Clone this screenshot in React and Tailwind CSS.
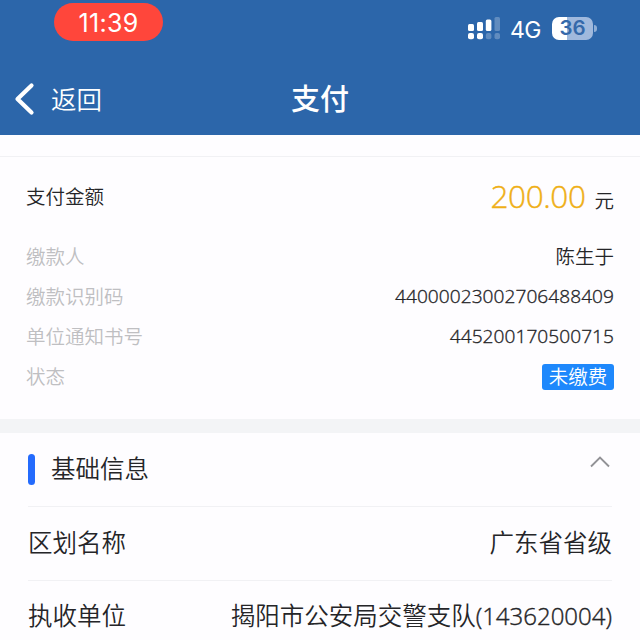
import clsx from 'clsx';

const payment = [
  { label: '缴款人', value: '陈生于' },
  { label: '缴款识别码', value: '44000023002706488409', numeric: true },
  { label: '单位通知书号', value: '445200170500715', numeric: true },
];

const Battery = () => (
  <div className="flex items-center">
    <div className="flex h-[23px] w-[41px] items-center justify-center rounded-[7px] bg-linear-to-r from-white from-36% to-[#a0b9dd] to-36%">
      <span className="pt-px font-['Inter'] text-[20.5px] leading-none font-semibold text-[#3569aa]">36</span>
    </div>
    <div className="ml-px h-[7px] w-[3px] rounded-r-full bg-[#8faed6]" />
  </div>
);

// two SIMs: the upper bars belong to the first one, the dots to the second
const Signal = () => (
  <svg width="33" height="24" viewBox="0 0 33 24" fill="#fff">
    <rect x="0" y="8" width="6" height="7" rx="1.5" />
    <rect x="9" y="6" width="6" height="9" rx="1.5" />
    <rect x="17.8" y="3.5" width="5.6" height="11.5" rx="1.5" />
    <rect x="26.5" y="1" width="5.5" height="14" rx="1.5" fillOpacity="0.25" />
    <rect x="0" y="17" width="6" height="6.3" rx="2" />
    <rect x="9" y="17" width="6" height="6.3" rx="2" />
    <rect x="17.8" y="17" width="5.6" height="6.3" rx="2" fillOpacity="0.25" />
    <rect x="26.5" y="17" width="5.5" height="6.3" rx="2" fillOpacity="0.25" />
  </svg>
);

function StatusBar() {
  return (
    <div className="flex h-[62px] items-start justify-between pr-[43px] pl-[54px]">
      <div className="mt-[3px] flex h-[38px] w-[109px] items-center justify-center rounded-full bg-[#ff463b] pt-[3px] font-['Inter'] text-[25px] font-normal tracking-[0.3px]">
        11:39
      </div>
      <div className="mt-4 flex h-6 items-center">
        <Signal />
        <span className="ml-[9px] w-[32px] pt-[3px] font-['Inter'] text-[23px] leading-6 font-normal tracking-[-0.5px] whitespace-nowrap">4G</span>
        <div className="ml-[10px]">
          <Battery />
        </div>
      </div>
    </div>
  );
}

function NavBar() {
  return (
    <div className="grid h-[73px] grid-cols-3 items-center pl-[14px] pr-[14px]">
      <div className="flex items-center">
        <svg width="22" height="34" viewBox="0 0 22 34" fill="none" stroke="#fff" strokeWidth="4.2" strokeLinecap="round" strokeLinejoin="round">
          <path d="M17.5 3.5 L3.5 17 L17.5 30.5" />
        </svg>
        <span className="ml-[15px] text-[25.5px]">返回</span>
      </div>
      <h1 className="pb-[3px] text-center text-[29px] leading-none font-medium">支付</h1>
    </div>
  );
}

function PaymentSummary() {
  return (
    <section className="h-[263px] border-t border-[#f1f1f4] px-[26px]">
      <div className="flex h-20 items-center justify-between pb-[3px] text-[19.5px]">
        <span>支付金额</span>
        <span className="flex items-baseline">
          <span className="font-['Open_Sans'] text-[31.5px] font-light tracking-[-0.4px] text-[#efaf16] [-webkit-text-stroke:0.4px]">200.00</span>
          <span className="ml-[9px]">元</span>
        </span>
      </div>
      {payment.map(({ label, value, numeric }) => (
        <div key={label} className="flex h-10 items-center justify-between pb-[2px] text-[19.5px]">
          <span className="text-[#bfbfc2]">{label}</span>
          <span className={clsx(numeric && "font-['Open_Sans'] text-[19.1px] font-light tracking-[0.05px] [-webkit-text-stroke:0.35px]")}>{value}</span>
        </div>
      ))}
      <div className="flex h-10 items-center justify-between text-[19.5px]">
        <span className="pb-[2px] text-[#bfbfc2]">状态</span>
        <span className="h-[26px] w-[72px] rounded-[3px] bg-[#1e88fc] text-center leading-[24px] text-white">未缴费</span>
      </div>
    </section>
  );
}

function InfoRow({ label, children }) {
  return (
    <div className="flex h-[73.5px] items-center justify-between border-t border-[#f1f1f4] pb-[2px]">
      <span>{label}</span>
      <span>{children}</span>
    </div>
  );
}

function BasicInfo() {
  return (
    <section className="border-t-[14px] border-[#f3f4f6] px-7 text-[24.5px]">
      <div className="flex h-[73px] items-center">
        <span className="h-[31px] w-[6.5px] rounded-full bg-[#246bfd]" />
        <span className="ml-[16.5px] pb-[2px]">基础信息</span>
        <svg className="mr-[2px] mb-[15px] ml-auto" width="20" height="12" viewBox="0 0 20 12" fill="none" stroke="#929296" strokeWidth="1.9">
          <path d="M1 10.5 L10 1.5 L19 10.5" />
        </svg>
      </div>
      <InfoRow label="区划名称">广东省省级</InfoRow>
      <InfoRow label="执收单位">
        揭阳市公安局交警支队<span className="font-['Open_Sans'] text-[24px] font-light [-webkit-text-stroke:0.4px]">(143620004)</span>
      </InfoRow>
    </section>
  );
}

export default function App() {
  return (
    <div className="h-[640px] w-[640px] overflow-hidden bg-[#fefdff] font-['Noto_Sans_CJK_SC',sans-serif] font-[350] text-[#252528]">
      <header className="bg-[#2c66aa] text-white">
        <StatusBar />
        <NavBar />
      </header>
      <div className="h-[21px]" />
      <PaymentSummary />
      <BasicInfo />
    </div>
  );
}
